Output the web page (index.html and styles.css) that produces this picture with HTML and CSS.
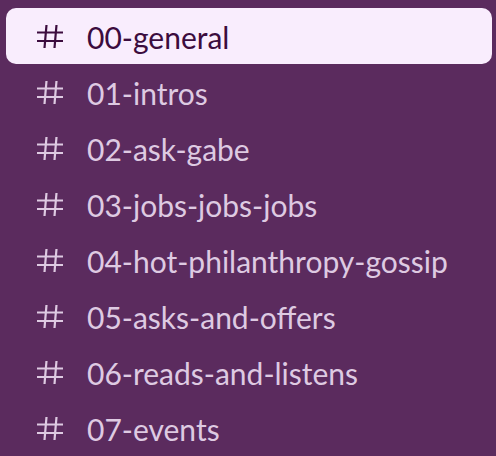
FILE: index.html
```html
<!DOCTYPE html>
<html>
<head>
<meta charset="utf-8">
<link rel="stylesheet" href="styles.css">
</head>
<body>
<ul class="channels">
  <li class="channel active"><svg class="hash" viewBox="0 0 26 23" aria-hidden="true"><path d="M9.5 0 L7.5 23 M19.5 0 L17.5 23 M0 7.5 H26 M0 16 H26"/></svg><span class="name">00-general</span></li>
  <li class="channel"><svg class="hash" viewBox="0 0 26 23" aria-hidden="true"><path d="M9.5 0 L7.5 23 M19.5 0 L17.5 23 M0 7.5 H26 M0 16 H26"/></svg><span class="name">01-intros</span></li>
  <li class="channel"><svg class="hash" viewBox="0 0 26 23" aria-hidden="true"><path d="M9.5 0 L7.5 23 M19.5 0 L17.5 23 M0 7.5 H26 M0 16 H26"/></svg><span class="name">02-ask-gabe</span></li>
  <li class="channel"><svg class="hash" viewBox="0 0 26 23" aria-hidden="true"><path d="M9.5 0 L7.5 23 M19.5 0 L17.5 23 M0 7.5 H26 M0 16 H26"/></svg><span class="name">03-jobs-jobs-jobs</span></li>
  <li class="channel"><svg class="hash" viewBox="0 0 26 23" aria-hidden="true"><path d="M9.5 0 L7.5 23 M19.5 0 L17.5 23 M0 7.5 H26 M0 16 H26"/></svg><span class="name">04-hot-philanthropy-gossip</span></li>
  <li class="channel"><svg class="hash" viewBox="0 0 26 23" aria-hidden="true"><path d="M9.5 0 L7.5 23 M19.5 0 L17.5 23 M0 7.5 H26 M0 16 H26"/></svg><span class="name">05-asks-and-offers</span></li>
  <li class="channel"><svg class="hash" viewBox="0 0 26 23" aria-hidden="true"><path d="M9.5 0 L7.5 23 M19.5 0 L17.5 23 M0 7.5 H26 M0 16 H26"/></svg><span class="name">06-reads-and-listens</span></li>
  <li class="channel"><svg class="hash" viewBox="0 0 26 23" aria-hidden="true"><path d="M9.5 0 L7.5 23 M19.5 0 L17.5 23 M0 7.5 H26 M0 16 H26"/></svg><span class="name">07-events</span></li>
</ul>
</body>
</html>
```
FILE: styles.css
```css
html, body {
  margin: 0;
  padding: 0;
  background: #5b2b5e;
  height: 100%;
  overflow: hidden;
}
.channels {
  list-style: none;
  margin: 0;
  padding: 8px 4px 0 6px;
  display: flex;
  flex-direction: column;
  font-family: Lato, "Noto Sans", sans-serif;
}
.channel {
  display: flex;
  align-items: center;
  box-sizing: border-box;
  height: 56px;
  padding: 1px 0 0 31px;
  border-radius: 10px;
  color: #decae2;
  font-size: 30px;
}
.channel.active {
  background: #f9edfd;
  color: #3c0c3e;
}
.hash {
  width: 26px;
  height: 23px;
  flex: none;
  margin-right: 24px;
  fill: none;
  stroke: currentColor;
  stroke-width: 2.2;
}
.name {
  line-height: 1;
}
```
